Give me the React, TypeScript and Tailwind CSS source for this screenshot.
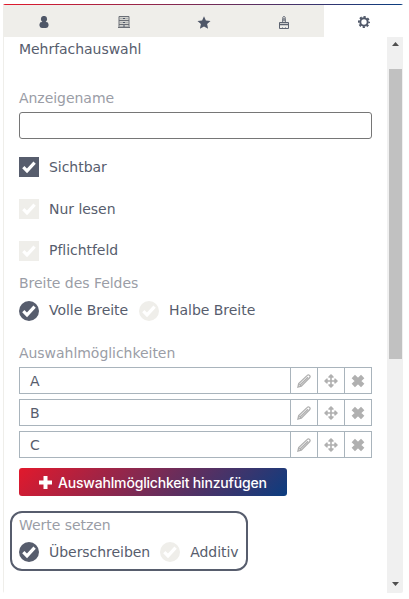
import { useState } from "react";
import type { ReactNode } from "react";

const tabs = ["user", "data", "favorites", "style", "settings"];
const options = ["A", "B", "C"];

const TabIcon = ({ name }: { name: string }) => {
  switch (name) {
    case "user":
      return (
        <svg width="10" height="12" viewBox="0 0 10 12" fill="#4f5768">
          <ellipse cx="5" cy="3" rx="3.1" ry="3.1" />
          <rect x="0.5" y="6" width="9" height="6" rx="2.4" />
          <rect x="3.500" y="5" width="3" height="3" />
        </svg>
      );
    case "data":
      return (
        <svg width="12" height="12" viewBox="0 0 12 12" fill="none" stroke="#6b6f76">
          <path d="M1 .5h10v11H1z" fill="#d3d3cf" />
          <path d="M1 4.500h10M1 8.500h10M0 11.500h12" />
          <path d="M2 2.500h8M2 6.500h8M2 10.500h8" stroke="#b0b2b2" />
          <path d="M5 2.500h2M5 6.500h2M5 10h2" stroke="#4f5768" />
        </svg>
      );
    case "favorites":
      return (
        <svg width="14" height="13" viewBox="0 0 14 13" fill="#4f5768">
          <path d="M7 .3l1.900 4.200 4.600.5-3.400 3.100 1 4.600L7 10.400l-4.100 2.300 1-4.600L.5 5l4.600-.5z" />
        </svg>
      );
    case "style":
      return (
        <svg width="10" height="13" viewBox="0 0 10 13" fill="none" stroke="#5d6370">
          <path d="M3.700 6V2.500C3.700 1 4.200.5 5 .5s1.300.5 1.300 2V6" />
          <path d="M5 2v3" strokeWidth="1.200" />
          <path d="M.5 8.500v-2h9v2" />
          <path d="M0 8.500h10" strokeWidth="1.500" />
          <path d="M.5 9v3.500h9V9M3.500 11.500v1M6.500 11.500v1" />
        </svg>
      );
    default:
      return (
        <svg width="12" height="12" viewBox="0 0 12 12" fill="none" stroke="#4f5768">
          <circle cx="6" cy="6" r="3.700" strokeWidth="2" />
          <circle
            cx="6"
            cy="6"
            r="5.100"
            strokeWidth="1.800"
            strokeDasharray="2.200 1.805"
            strokeDashoffset="1.100"
          />
        </svg>
      );
  }
};

const Check = ({ checked, round }: { checked: boolean; round?: boolean }) => (
  <span
    className={`flex size-5 shrink-0 items-center justify-center ${
      checked ? "bg-[#575d6d]" : "bg-[#efeeea]"
    } ${round ? "rounded-full" : ""}`}
  >
    <svg width="20" height="20" viewBox="0 0 20 20" fill="none" stroke="white" strokeWidth="3.200">
      <path d="M4.300 10.200l3.700 3.700 7.600-8.300" />
    </svg>
  </span>
);

const Choice = ({
  label,
  checked,
  round,
  raised,
  onClick,
}: {
  label: string;
  checked: boolean;
  round?: boolean;
  raised?: boolean;
  onClick: () => void;
}) => (
  <button type="button" onClick={onClick} className="flex h-5 items-center gap-2.5 whitespace-nowrap">
    <Check checked={checked} round={round} />
    <span className={`leading-5 ${raised ? "pb-0.5" : ""}`}>{label}</span>
  </button>
);

const Label = ({ children }: { children: ReactNode }) => (
  <div className="leading-5 text-[#9a9da6]">{children}</div>
);

const PencilIcon = () => (
  <svg width="14" height="14" viewBox="0 0 14 14" fill="none" stroke="#b0b0b0" strokeWidth="1.300">
    <path d="M.9 13.100l.8-3.500 8.600-8.200c.8-.8 1.500-.7 2.200 0s.9 1.500.1 2.300L4.300 12.200z" />
    <path d="M2.300 10.100l1.800 1.700M3.600 10.500l7.400-7.300" strokeWidth="1.600" />
  </svg>
);

const MoveIcon = () => (
  <svg width="14" height="14" viewBox="0 0 14 14" fill="#b0b0b0">
    <path d="M6.200 2v10h1.600V2zM2 6.200v1.600h10V6.200z" />
    <path d="M7 0l2.600 2.500v1.200H4.400V2.500zM7 14l2.600-2.500v-1.200H4.400v1.200zM0 7l2.500-2.600h1.200v5.200H2.500zM14 7l-2.500-2.600h-1.200v5.200h1.200z" />
  </svg>
);

const RemoveIcon = () => (
  <svg width="14" height="14" viewBox="0 0 14 14" stroke="#b0b0b0" strokeWidth="4.800">
    <path d="M2.300 2.500l9.400 9M11.700 2.500l-9.400 9" />
  </svg>
);

export default function App() {
  const [activeTab, setActiveTab] = useState("settings");
  const [flags, setFlags] = useState([true, false, false]);
  const [width, setWidth] = useState("full");
  const [mode, setMode] = useState("overwrite");

  return (
    <div className="h-[599px] w-[409px] bg-white pt-1 pl-[3px] font-['DejaVu_Sans',Verdana,sans-serif] text-[14px] tracking-[-0.04px] text-[#575d6d]">
      <div className="flex h-[589px] w-[400px] flex-col overflow-hidden rounded-[2px]">
        <div className="h-px shrink-0 bg-linear-to-r/srgb from-[#e2192c] to-[#0b3d80]" />
        {/* Tab bar */}
        <div className="flex h-8 shrink-0 border-l border-[#efeeea]">
          {tabs.map((tab) => (
            <button
              key={tab}
              type="button"
              aria-label={tab}
              onClick={() => setActiveTab(tab)}
              className={`flex w-20 shrink-0 items-center justify-center pt-0.5 ${
                activeTab === tab ? "bg-white" : "bg-[#efeeea]"
              }`}
            >
              <TabIcon name={tab} />
            </button>
          ))}
        </div>

        <div className="flex min-h-0 flex-1 border-l border-[#efeeea]">
          {/* Field settings */}
          <div className="w-[383px] shrink-0 pt-0.5 pr-[15px] pl-[15px]">
            <div className="leading-5">Mehrfachauswahl</div>

            <div className="mt-[29px]">
              <Label>Anzeigename</Label>
              <input
                aria-label="Anzeigename"
                className="mt-1 block h-[27px] w-[353px] rounded-[3px] border border-[#767676] px-2 outline-none"
              />
            </div>

            <div className="mt-[18px] flex flex-col gap-[22px]">
              {["Sichtbar", "Nur lesen", "Pflichtfeld"].map((label, i) => (
                <Choice
                  key={label}
                  label={label}
                  checked={flags[i]}
                  raised={i === 2}
                  onClick={() => setFlags(flags.map((f, j) => (j === i ? !f : f)))}
                />
              ))}
            </div>

            <div className="mt-3">
              <Label>Breite des Feldes</Label>
              <div className="mt-2 flex gap-[11px]">
                <Choice round raised label="Volle Breite" checked={width === "full"} onClick={() => setWidth("full")} />
                <Choice round raised label="Halbe Breite" checked={width === "half"} onClick={() => setWidth("half")} />
              </div>
            </div>

            <div className="mt-[22px]">
              <Label>Auswahlmöglichkeiten</Label>
              <div className="mt-1 flex flex-col gap-[5px]">
                {options.map((option) => (
                  <div
                    key={option}
                    className="flex h-[27px] w-[353px] divide-x divide-[#a9b4bc] border border-[#a9b4bc]"
                  >
                    <div className="flex-1 pl-2.5 leading-[26px]">{option}</div>
                    <button type="button" aria-label="Bearbeiten" className="flex w-[27px] items-center justify-center">
                      <PencilIcon />
                    </button>
                    <button type="button" aria-label="Verschieben" className="flex w-[27px] items-center justify-center">
                      <MoveIcon />
                    </button>
                    <button type="button" aria-label="Entfernen" className="flex w-[26px] items-center justify-center">
                      <RemoveIcon />
                    </button>
                  </div>
                ))}
              </div>
            </div>

            <button
              type="button"
              className="mt-2.5 flex h-7 w-[268px] items-center rounded-[3px] bg-linear-135/srgb from-[#e2192c] to-[#0b3d80] pt-px pl-5 font-['Inter',sans-serif] text-[14px] font-medium tracking-[-0.18px] whitespace-nowrap text-white"
            >
              <svg width="13" height="13" viewBox="0 0 13 13" stroke="white" strokeWidth="4" className="mr-1.5">
                <path d="M6.500 0v13M0 6.500h13" />
              </svg>
              Auswahlmöglichkeit hinzufügen
            </button>

            <div className="mt-[15px] -ml-[9px] h-[60px] w-[238px] rounded-xl border-2 border-[#575d6d] pt-0.5 pl-[7px]">
              <Label>Werte setzen</Label>
              <div className="mt-[7px] flex gap-2.5">
                <Choice round label="Überschreiben" checked={mode === "overwrite"} onClick={() => setMode("overwrite")} />
                <Choice round label="Additiv" checked={mode === "additive"} onClick={() => setMode("additive")} />
              </div>
            </div>
          </div>

          {/* Scrollbar */}
          <div className="flex w-4 shrink-0 flex-col items-center bg-[#f0f0f0]">
            <svg width="7" height="4" viewBox="0 0 7 4" fill="#505050" className="mt-[5px] shrink-0">
              <path d="M3.500 0L7 4H0z" />
            </svg>
            <div className="mt-[23px] h-[290px] w-[13px] bg-[#c1c1c1]" />
            <svg width="7" height="4" viewBox="0 0 7 4" fill="#505050" className="mt-auto mb-[7px] shrink-0">
              <path d="M3.500 4L7 0H0z" />
            </svg>
          </div>
        </div>
      </div>
    </div>
  );
}
